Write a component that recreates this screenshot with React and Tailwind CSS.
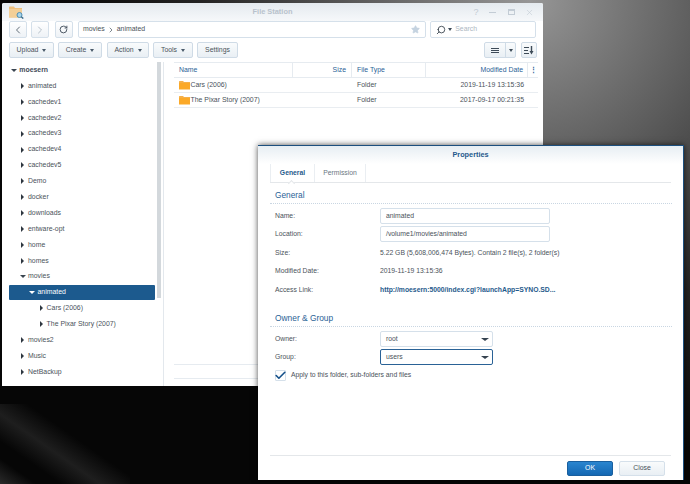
import { Check, ChevronLeft, ChevronRight, RotateCw, Search, Star, X } from 'lucide-react';

const treeItems = [
  { name: 'animated', indent: 'pl-[18px]' },
  { name: 'cachedev1', indent: 'pl-[18px]' },
  { name: 'cachedev2', indent: 'pl-[18px]' },
  { name: 'cachedev3', indent: 'pl-[18px]' },
  { name: 'cachedev4', indent: 'pl-[18px]' },
  { name: 'cachedev5', indent: 'pl-[18px]' },
  { name: 'Demo', indent: 'pl-[18px]' },
  { name: 'docker', indent: 'pl-[18px]' },
  { name: 'downloads', indent: 'pl-[18px]' },
  { name: 'entware-opt', indent: 'pl-[18px]' },
  { name: 'home', indent: 'pl-[18px]' },
  { name: 'homes', indent: 'pl-[18px]' },
  { name: 'movies', indent: 'pl-[18px]', open: true },
  { name: 'animated', indent: 'ml-[7px] pl-[20.5px]', open: true, selected: true },
  { name: 'Cars (2006)', indent: 'pl-[36.6px]' },
  { name: 'The Pixar Story (2007)', indent: 'pl-[36.6px]' },
  { name: 'movies2', indent: 'pl-[18px]' },
  { name: 'Music', indent: 'pl-[18px]' },
  { name: 'NetBackup', indent: 'pl-[18px]' },
];

const files = [
  { name: 'Cars (2006)', type: 'Folder', date: '2019-11-19 13:15:36' },
  { name: 'The Pixar Story (2007)', type: 'Folder', date: '2017-09-17 00:21:35' },
];

function FolderIcon() {
  return (
    <svg width="11" height="10" viewBox="0 0 11 10" className="shrink-0">
      <path d="M0 1.5 L0 3 L11 3 L11 2 L5 2 L4 1 L0.5 1 Z" fill="#f5b04a" />
      <rect x="0" y="3" width="11" height="6.5" fill="#fba928" />
    </svg>
  );
}

function AppIcon() {
  return (
    <svg width="15" height="14" viewBox="0 0 15 14">
      <path d="M0 2 L0 12.5 L13 12.5 L13 3 L6 3 L5 1.5 L0.5 1.5 Z" fill="#eec17f" />
      <rect x="0" y="4" width="13" height="8.5" fill="#f3cf97" />
      <circle cx="10.5" cy="10" r="2.5" fill="#a9d4ea" stroke="#4d8fb5" strokeWidth="1" />
      <path d="M12.3 11.8 L14.3 13.6" stroke="#3d6f8e" strokeWidth="1.4" />
    </svg>
  );
}

function Caret({ className }) {
  return <span className={`inline-block w-0 h-0 border-x-[2.5px] border-x-transparent border-t-[3px] ${className}`} />;
}

function TreeArrow({ open, light }) {
  return (
    <span className="w-[5px] flex justify-center shrink-0">
      {open ? (
        <span className={`w-0 h-0 border-x-[3px] border-x-transparent border-t-[3px] ${light ? 'border-t-white' : 'border-t-[#3a4550]'}`} />
      ) : (
        <span className="w-0 h-0 border-y-[3px] border-y-transparent border-l-[3px] border-l-[#2e3740]" />
      )}
    </span>
  );
}

function NavButton({ children }) {
  return (
    <button className="w-[18px] h-[17px] flex items-center justify-center rounded-[2px] border border-[#d5e0ea] bg-gradient-to-b from-white to-[#eef2f6]">
      {children}
    </button>
  );
}

function ToolButton({ label, width, menu = true }) {
  return (
    <button className={`${width} h-[16px] flex items-center justify-center gap-[4px] rounded-[2px] border border-[#cfdbe6] bg-gradient-to-b from-[#f9fbfc] to-[#e9eff4] text-[6.9px] text-[#4a525a]`}>
      {label}
      {menu && <Caret className="border-t-[#4a5a6a]" />}
    </button>
  );
}

function FileStation() {
  return (
    <div className="absolute left-[2px] top-[3px] w-[541px] h-[383px] overflow-hidden bg-white rounded-t-[2px] text-[6.9px] font-['Liberation_Sans',sans-serif]">
      <div className="h-[18px] relative flex items-center pl-[7px] bg-gradient-to-b from-[#e4eaef] to-[#f6f8fa]">
        <AppIcon />
        <span className="absolute left-0 right-0 text-center text-[7.4px] font-bold text-[#b8c2cc]">File Station</span>
        <div className="absolute left-[470px] top-[4px] flex items-center text-[#c3ccd5]">
          <span className="w-[8px] text-center text-[9px] leading-[10px]">?</span>
          <span className="ml-[9px] w-[7px] h-[1px] bg-[#c3ccd5]" />
          <span className="ml-[12px] w-[7px] h-[6px] border border-t-2 border-[#c3ccd5]" />
          <X size={9} strokeWidth={1.5} className="ml-[10px]" />
        </div>
      </div>

      <div className="h-[21px] flex items-start pl-[7px] pr-[7px] gap-[4px]">
        <NavButton><ChevronLeft size={12} strokeWidth={1.6} color="#3e4b58" /></NavButton>
        <NavButton><ChevronRight size={12} strokeWidth={1.6} color="#a3b1bd" /></NavButton>
        <div className="ml-[2px]"><NavButton><RotateCw size={9} strokeWidth={2.4} color="#3e4b58" /></NavButton></div>
        <div className="ml-[1px] w-[349px] h-[17px] flex items-center pl-[4px] pr-[5px] border border-[#d5e0ea] rounded-[2px] text-[#4a525a]">
          <span>movies</span>
          <ChevronRight size={8} strokeWidth={2} color="#3e4b58" className="mx-[2px]" />
          <span>animated</span>
          <Star size={9} fill="#c5d3e0" color="#c5d3e0" className="ml-auto" />
        </div>
        <div className="w-[106px] h-[17px] flex items-center pl-[5px] gap-[2px] border border-[#d5e0ea] rounded-[2px] text-[#aeb8c2]">
          <Search size={10} strokeWidth={2} color="#2f3a45" className="-scale-x-100" />
          <Caret className="border-t-[#3e4b58]" />
          <span className="ml-[1px]">Search</span>
        </div>
      </div>

      <div className="h-[20px] flex items-start pl-[7px] pr-[6px]">
        <ToolButton label="Upload" width="w-[45px]" />
        <div className="ml-[4px]"><ToolButton label="Create" width="w-[44px]" /></div>
        <div className="ml-[5px]"><ToolButton label="Action" width="w-[42px]" /></div>
        <div className="ml-[4px]"><ToolButton label="Tools" width="w-[40px]" /></div>
        <div className="ml-[4px]"><ToolButton label="Settings" width="w-[41px]" menu={false} /></div>
        <div className="ml-auto flex gap-[5px]">
          <div className="w-[32px] h-[16px] flex rounded-[2px] border border-[#cfdbe6] bg-gradient-to-b from-[#f9fbfc] to-[#e9eff4]">
            <div className="w-[21px] flex flex-col items-center justify-center gap-[1px] border-r border-[#cfdbe6]">
              <span className="w-[8px] h-[1px] bg-[#3e4b58]" />
              <span className="w-[8px] h-[1px] bg-[#3e4b58]" />
              <span className="w-[8px] h-[1px] bg-[#3e4b58]" />
            </div>
            <div className="flex-1 flex items-center justify-center"><Caret className="border-t-[#3e4b58]" /></div>
          </div>
          <div className="w-[16px] h-[16px] flex items-center justify-center gap-[1px] rounded-[2px] border border-[#cfdbe6] bg-gradient-to-b from-[#f9fbfc] to-[#e9eff4]">
            <svg width="10" height="9" viewBox="0 0 10 9">
              <path d="M0 1.5 H5 M0 4.5 H4 M0 7.5 H5" stroke="#3e4b58" strokeWidth="1" />
              <path d="M7.5 0 V6" stroke="#3e4b58" strokeWidth="1.4" />
              <path d="M5.5 5 H9.5 L7.5 8.5 Z" fill="#3e4b58" />
            </svg>
          </div>
        </div>
      </div>

      <div className="flex h-[324px]">
        <div className="w-[162px] relative border-r border-[#e3e8ed] shrink-0">
          <div className="h-[16px] flex items-center pl-[9.3px] gap-[3px] font-bold text-[#3f4b57]">
            <TreeArrow open />
            <span>moesern</span>
          </div>
          {treeItems.map((item, i) => (
            <div
              key={i}
              className={`h-[15.9px] flex items-center gap-[3px] ${item.indent} ${
                item.selected ? 'w-[146px] rounded-[1px] bg-[#1c5a8e] text-white' : 'text-[#4a525a]'
              }`}
            >
              <TreeArrow open={item.open} light={item.selected} />
              <span>{item.name}</span>
            </div>
          ))}
          <div className="absolute left-[155px] top-0 w-[4px] h-[236px] bg-[#d3d8dc]" />
        </div>

        <div className="ml-[10px] w-[364px]">
          <div className="h-[16px] flex items-center border-y border-[#e6ebf0] text-[#2a6296]">
            <span className="w-[119px] pl-[5px] border-r border-[#e6ebf0] leading-[14px]">Name</span>
            <span className="w-[59px] pr-[5px] text-right border-r border-[#e6ebf0] leading-[14px]">Size</span>
            <span className="w-[74px] pl-[5px] border-r border-[#e6ebf0] leading-[14px]">File Type</span>
            <span className="w-[102px] pr-[4px] text-right border-r border-[#e6ebf0] leading-[14px]">Modified Date</span>
            <span className="flex-1 text-center font-bold leading-[14px]">⋮</span>
          </div>
          {files.map((file) => (
            <div key={file.name} className="h-[15px] flex items-center border-b border-[#e9edf1] text-[#4a525a]">
              <span className="w-[178px] pl-[5px] flex items-center gap-[0.5px]">
                <FolderIcon />
                {file.name}
              </span>
              <span className="w-[74px] pl-[5px]">{file.type}</span>
              <span className="w-[102px] pr-[4px] text-right">{file.date}</span>
            </div>
          ))}
          <div className="mt-[256px] h-[15px] border-y border-[#e6ebf0]" />
        </div>
      </div>
    </div>
  );
}

function Field({ label, children, className }) {
  return (
    <div className={`flex items-center ${className}`}>
      <span className="w-[105px] shrink-0 text-[#4a525a]">{label}</span>
      {children}
    </div>
  );
}

function TextBox({ value }) {
  return (
    <div className="w-[170px] h-[16px] flex items-center pl-[5px] border border-[#d5e0ea] rounded-[2px] text-[#4a525a]">{value}</div>
  );
}

function SelectBox({ value, active }) {
  return (
    <div className={`w-[113px] h-[16px] flex items-center justify-between pl-[5px] pr-[3px] border rounded-[2px] text-[#4a525a] ${active ? 'border-[#2a6296]' : 'border-[#d5e0ea]'}`}>
      {value}
      <span className="w-0 h-0 border-x-[4px] border-x-transparent border-t-[3px] border-t-[#35424f]" />
    </div>
  );
}

function Properties() {
  return (
    <div className="absolute left-[258px] top-[145px] w-[426px] h-[335px] flex flex-col bg-white border-t border-r border-[#1c4f7e] shadow-[0_0_6px_rgba(0,0,0,0.7)] text-[6.8px] font-['Liberation_Sans',sans-serif]">
      <div className="h-[18px] flex items-center justify-center shrink-0 bg-gradient-to-b from-[#e7eef3] to-white text-[7.3px] font-bold text-[#1f5a8c]">Properties</div>
      <div className="h-[19px] mx-[12px] flex border-b border-[#e4e7ea] shrink-0">
        <div className="relative w-[44px] flex items-center justify-center border-l border-[#eaeef2] font-bold text-[#1f5a8c]">
          General
          <span className="absolute left-[18px] -bottom-[1px] w-[5px] h-[5px] translate-y-[3px] rotate-45 bg-white border-l border-t border-[#e4e7ea]" />
        </div>
        <div className="w-[52px] flex items-center justify-center border-x border-[#eaeef2] text-[#6a7682]">Permission</div>
      </div>

      <div className="flex-1 pl-[17px] pr-[11px]">
        <div className="mt-[6px] -ml-[5px] pl-[5px] pb-[2px] h-[15px] flex items-center border-b border-dotted border-[#c9d6e2] text-[8.3px] text-[#2a6296]">General</div>
        <Field label="Name:" className="mt-[4px] h-[16px]"><TextBox value="animated" /></Field>
        <Field label="Location:" className="mt-[2px] h-[16px]"><TextBox value="/volume1/movies/animated" /></Field>
        <Field label="Size:" className="mt-[2px] h-[18px]"><span className="text-[#4a525a]">5.22 GB (5,608,006,474 Bytes). Contain 2 file(s), 2 folder(s)</span></Field>
        <Field label="Modified Date:" className="h-[18px]"><span className="text-[#4a525a]">2019-11-19 13:15:36</span></Field>
        <Field label="Access Link:" className="h-[20px]"><span className="font-bold text-[#1f5a8c]">http://moesern:5000/index.cgi?launchApp=SYNO.SD...</span></Field>
        <div className="mt-[12px] -ml-[5px] pl-[5px] pb-[1px] h-[15px] flex items-center border-b border-dotted border-[#c9d6e2] text-[8.4px] text-[#2a6296]">Owner &amp; Group</div>
        <Field label="Owner:" className="mt-[4px] h-[16px]"><SelectBox value="root" /></Field>
        <Field label="Group:" className="mt-[2px] h-[16px]"><SelectBox value="users" active /></Field>
        <div className="mt-[3px] h-[14px] flex items-center gap-[5px] text-[#4a525a]">
          <span className="w-[11px] h-[11px] flex items-center justify-center border border-[#d5e0ea] rounded-[1px]">
            <Check size={13} strokeWidth={3} color="#14508a" className="shrink-0" />
          </span>
          Apply to this folder, sub-folders and files
        </div>
      </div>

      <div className="h-[25px] mx-[12px] flex items-start justify-end pt-[5px] pr-[6px] gap-[6px] border-t border-[#e4e7ea] shrink-0">
        <button className="w-[46px] h-[15px] rounded-[2px] border border-[#1a5f9e] bg-gradient-to-b from-[#2a85cf] to-[#1468b3] text-[6.9px] text-white">OK</button>
        <button className="w-[46px] h-[15px] rounded-[2px] border border-[#d5e0ea] bg-gradient-to-b from-[#f9fbfc] to-[#e9eff4] text-[6.9px] text-[#4a525a]">Close</button>
      </div>
    </div>
  );
}

export default function App() {
  return (
    <div className="relative w-[690px] h-[484px] overflow-hidden bg-[radial-gradient(circle_at_530px_0px,#969696,#5c5c5c_170px,#232323_330px,#060606_480px)]">
      <div className="absolute left-0 bottom-0 w-[130px] h-[80px] bg-[linear-gradient(35deg,#2a2a2a_0%,transparent_15%,transparent_25%,#1e1e1e_41%,transparent_58%)]" />
      <FileStation />
      <Properties />
    </div>
  );
}
